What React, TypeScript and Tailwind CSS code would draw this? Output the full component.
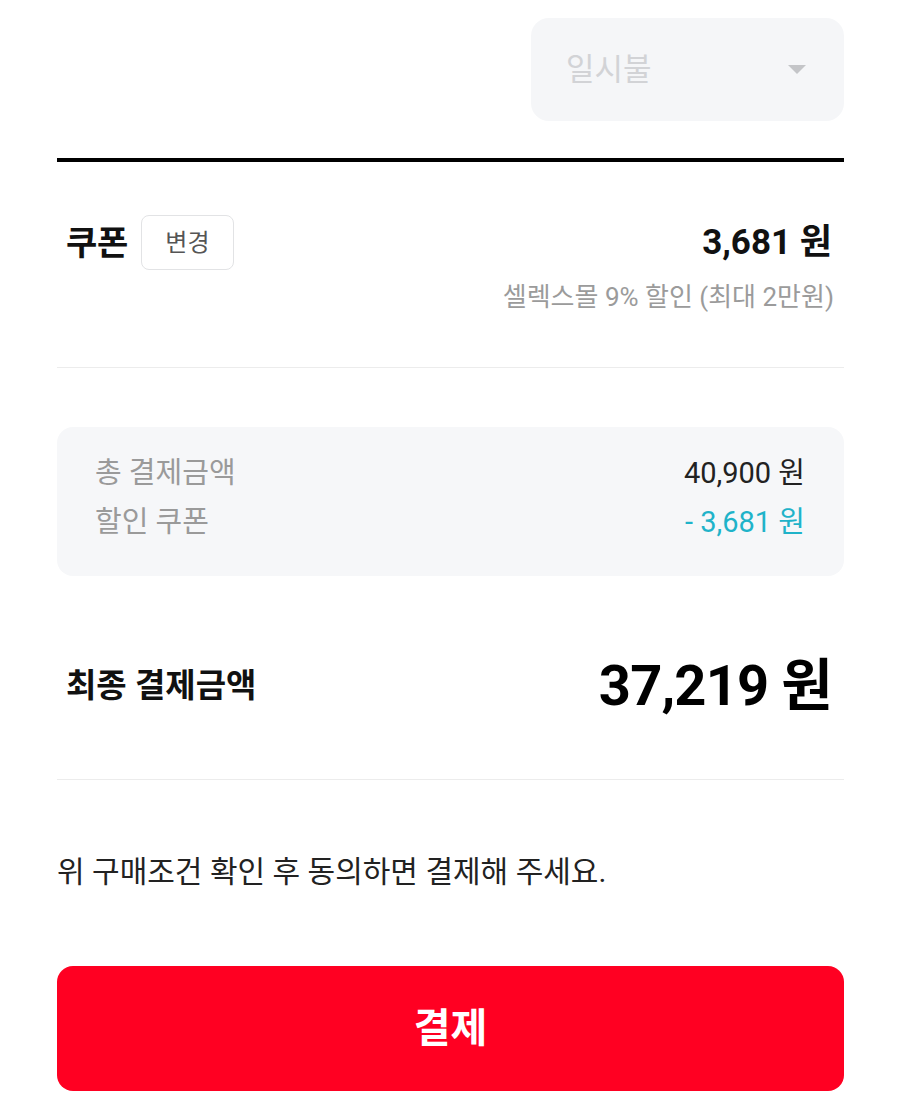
import React from "react";

const font = { fontFamily: 'Roboto, "Noto Sans CJK KR", sans-serif' };

export default function App() {
  return (
    <div
      className="w-[900px] h-[1119px] bg-white overflow-hidden pl-[57px] pr-[56px] pt-[18px] font-['Roboto','Noto_Sans_CJK_KR',sans-serif]"
      style={font}
    >
      {/* installment dropdown */}
      <div className="flex justify-end">
        <div className="w-[313px] h-[103px] rounded-[18px] bg-[#f5f6f8] flex items-center justify-between pl-[35px] pr-[38px]">
          <span className="text-[31px] leading-none text-[#d2d3d6]">일시불</span>
          <svg width="18" height="10" viewBox="0 0 18 10">
            <path d="M0 0 L18 0 L9 9 Z" fill="#c4c5c8" />
          </svg>
        </div>
      </div>

      <div className="mt-[37px] h-[4px] bg-black" />

      {/* coupon */}
      <div className="pt-[53px] pb-[57px]">
        <div className="flex items-center justify-between">
          <div className="flex items-center pl-[9px]">
            <span className="text-[34px] font-bold leading-none text-[#111] tracking-[-0.01em]">쿠폰</span>
            <span className="ml-[13px] w-[93px] h-[55px] rounded-[8px] border border-[#e2e3e5] flex items-center justify-center text-[24px] text-[#555]">
              변경
            </span>
          </div>
          <span className="pr-[12px] text-[35px] font-bold leading-none text-[#111]">
            3,681 원
          </span>
        </div>
        <div className="mt-[14px] pr-[10px] text-right text-[26px] leading-none text-[#9b9b9b]">
          셀렉스몰 9% 할인 (최대 2만원)
        </div>
      </div>

      <div className="h-px bg-[#ececec]" />

      {/* summary */}
      <div className="mt-[59px] h-[149px] rounded-[16px] bg-[#f6f7f9] pl-[38px] pr-[39px] pt-[30px] flex flex-col gap-[17px]">
        <div className="flex items-center justify-between h-[32px]">
          <span className="text-[29px] leading-none text-[#9a9a9a]">총 결제금액</span>
          <span className="text-[29px] leading-none text-[#222]">40,900 원</span>
        </div>
        <div className="flex items-center justify-between h-[32px]">
          <span className="text-[29px] leading-none text-[#9a9a9a]">할인 쿠폰</span>
          <span className="text-[29px] leading-none text-[#1fb3c9]">- 3,681 원</span>
        </div>
      </div>

      {/* final */}
      <div className="h-[203px] pt-[16px] flex items-center justify-between pl-[9px] pr-[12px]">
        <span className="text-[33px] font-bold leading-none text-[#111]">최종 결제금액</span>
        <span className="text-[56px] font-bold leading-none text-black tracking-[-0.015em]">37,219 원</span>
      </div>

      <div className="h-px bg-[#ececec]" />

      <div className="h-[186px] pt-[77px]">
        <p className="text-[30px] leading-none text-[#222]">
          위 구매조건 확인 후 동의하면 결제해 주세요.
        </p>
      </div>

      <div className="h-[125px] rounded-[16px] bg-[#ff0022] flex items-center justify-center">
        <span className="text-[40px] font-bold leading-none text-white">결제</span>
      </div>
    </div>
  );
}
